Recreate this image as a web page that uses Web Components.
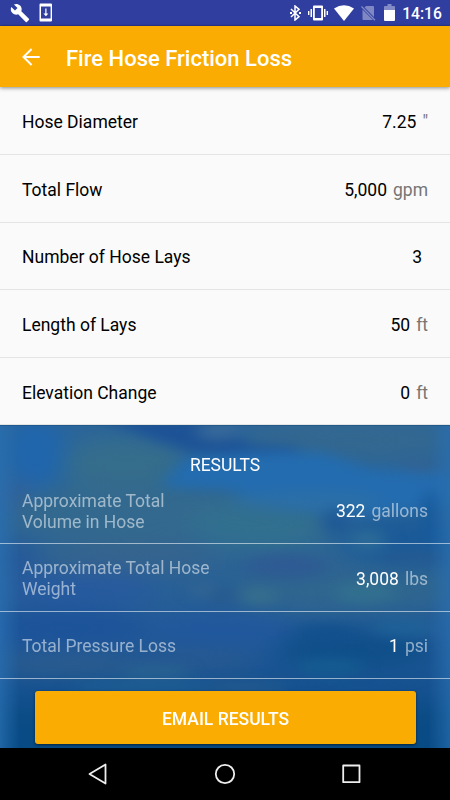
<!DOCTYPE html>
<html lang="en">
<head>
<meta charset="utf-8">
<title>Fire Hose Friction Loss</title>
<style>
  body {
    margin: 0;
    font-family: Roboto, "Liberation Sans", sans-serif;
    font-size: 17.5px;
    color: #000;
    background: #fafafa;
  }
</style>
</head>
<body>
<hose-app></hose-app>

<script>
class StatusBar extends HTMLElement {
  constructor() {
    super();
    this.attachShadow({ mode: "open" }).innerHTML = `
      <style>
        :host {
          display: flex;
          align-items: center;
          box-sizing: border-box;
          height: 26px;
          padding: 0 8px 0 10px;
          background: #303f9f;
          border-bottom: 1px solid #2c3990;
          color: #fff;
          font-size: 15.6px;
          font-weight: 500;
        }
        svg { display: block; fill: #fff; flex: none; }
        .space { flex: 1; }
        .time { line-height: 26px; padding-top: 3px; width: 40px; text-align: center; }
      </style>
      <svg width="20" height="20" viewBox="0 0 24 24"><path d="M22.7 19l-9.1-9.1c.9-2.3.4-5-1.5-6.9-2-2-5-2.4-7.4-1.3L9 6 6 9 1.6 4.700C.4 7.100.9 10.100 2.900 12.100c1.900 1.900 4.600 2.400 6.900 1.500l9.100 9.100c.4.400 1 .400 1.400 0l2.300-2.300c.5-.4.5-1.100.1-1.400z"/></svg>
      <svg width="14" height="19" viewBox="0 0 14 19" style="margin-left:9px"><path fill-rule="evenodd" d="M1.500.500h10.500q1 0 1 1v16q0 1-1 1H1.500q-1 0-1-1v-16q0-1 1-1zM2 3.500v12h9.600v-12z"/><path d="M6.300 5.500h1.200v5h1.900l-2.500 2.700-2.500-2.700h1.900z"/></svg>
      <span class="space"></span>
      <svg width="11" height="16" viewBox="0 0 11 16"><path d="M1 4l8 7.600-4 3.400V1l4 3.400L1 12" fill="none" stroke="#fff" stroke-width="1.500"/><path d="M0 7h2v2H0zM9 7h2v2H9z"/></svg>
      <svg width="20" height="16" viewBox="0 0 20 16" style="margin-left:7px"><path fill-rule="evenodd" d="M6 .5h8q1 0 1 1v13q0 1-1 1H6q-1 0-1-1v-13q0-1 1-1zM6.800 3v10h6.400V3z"/><path d="M2.500 4h1.500v8H2.500zM16 4h1.500v8H16zM0 6h1.400v4H0zM18.600 6H20v4h-1.400z"/></svg>
      <svg width="20" height="16" viewBox="0 0 20 16" style="margin-left:6px"><path d="M0 3.600Q10-3.300 20 3.600L10 16z"/></svg>
      <svg width="15" height="16" viewBox="0 0 15 16" style="margin-left:7px;opacity:.38"><path d="M5 1h7q1 0 1 1v10L3.600 2.400zM1.500 4.400L12 15H2.500q-1 0-1-1z"/><path d="M.500 1.500l13.500 13.700" fill="none" stroke="#fff" stroke-width="1.300"/></svg>
      <svg width="11" height="17" viewBox="0 0 11 17" style="margin-left:8px"><path opacity=".4" d="M3.500 0h4v2H10q1 0 1 1v3H0V3q0-1 1-1h2.500z"/><path d="M0 6h11v10q0 1-1 1H1q-1 0-1-1z"/></svg>
      <span class="time" style="margin-left:7px">14:16</span>
    `;
  }
}

class AppBar extends HTMLElement {
  constructor() {
    super();
    this.attachShadow({ mode: "open" }).innerHTML = `
      <style>
        :host {
          display: flex;
          align-items: center;
          box-sizing: border-box;
          height: 61px;
          padding: 3px 22px 0;
          background: #fbac02;
          box-shadow: 0 1px 4px rgba(0, 0, 0, .45);
          position: relative;
          color: #fff;
          font-size: 22px;
          font-weight: 500;
        }
        svg { margin: -3px 26px 0 0; }
      </style>
      <svg width="18" height="18" viewBox="0 0 18 18" fill="none" stroke="#fff" stroke-width="2"><path d="M17.700 9H1.500M9.600 1L1.500 9l8.100 8"/></svg>
      <slot></slot>
    `;
  }
}

class ValueRow extends HTMLElement {
  constructor() {
    super();
    this.attachShadow({ mode: "open" }).innerHTML = `
      <style>
        :host {
          display: flex;
          align-items: center;
          justify-content: space-between;
          box-sizing: border-box;
          height: 67.6px;
          padding: 4px 22px 0;
          border-bottom: 1px solid var(--line, #e4e4e4);
          line-height: 21px;
        }
        .label { color: var(--label, #000); max-width: 200px; }
        .unit { color: var(--unit, #757575); margin-left: 6px; }
      </style>
      <span class="label"><slot></slot></span>
      <span><span class="value"></span><span class="unit"></span></span>
    `;
  }

  connectedCallback() {
    this.shadowRoot.querySelector(".value").textContent = this.getAttribute("value");
    this.shadowRoot.querySelector(".unit").textContent = this.getAttribute("unit") || "";
  }
}

class ResultsPanel extends HTMLElement {
  constructor() {
    super();
    this.attachShadow({ mode: "open" }).innerHTML = `
      <style>
        :host {
          display: block;
          position: relative;
          box-sizing: border-box;
          height: 323px;
          overflow: hidden;
          color: #fff;
          --line: rgba(255, 255, 255, .55);
          --label: rgba(255, 255, 255, .53);
          --unit: rgba(255, 255, 255, .53);
        }
        .water { position: absolute; inset: 0; }
        .content { position: relative; }
        h2 {
          margin: 0;
          height: 51.4px;
          padding-top: 30px;
          box-sizing: border-box;
          font-size: 17.5px;
          font-weight: 400;
          line-height: 21px;
          text-align: center;
        }
      </style>
      <svg class="water" width="450" height="323" viewBox="0 0 450 323">
        <defs>
          <linearGradient id="sea" x1="0" y1="0" x2="0" y2="1">
            <stop offset="0" stop-color="#2b659b"/>
            <stop offset=".4" stop-color="#2d6595"/>
            <stop offset=".65" stop-color="#225a98"/>
            <stop offset=".82" stop-color="#155190"/>
            <stop offset=".9" stop-color="#0b4c86"/>
            <stop offset="1" stop-color="#074a84"/>
          </linearGradient>
          <linearGradient id="edge">
            <stop offset="0" stop-color="#2a70b2" stop-opacity=".7"/>
            <stop offset=".045" stop-color="#2a70b2" stop-opacity="0"/>
            <stop offset=".95" stop-color="#2a70b2" stop-opacity="0"/>
            <stop offset="1" stop-color="#2a70b2" stop-opacity=".65"/>
          </linearGradient>
          <filter id="soft" x="-20%" y="-20%" width="140%" height="140%" color-interpolation-filters="sRGB"><feGaussianBlur stdDeviation="11"/></filter>
          <filter id="fine" x="-20%" y="-20%" width="140%" height="140%" color-interpolation-filters="sRGB"><feGaussianBlur stdDeviation="8 6"/></filter>
        </defs>
        <rect width="450" height="323" fill="url(#sea)"/>
        <g filter="url(#soft)">
          <ellipse cx="125" cy="38" rx="62" ry="27" fill="#356d8c"/>
          <ellipse cx="35" cy="28" rx="30" ry="36" fill="#2066ac"/>
          <ellipse cx="14" cy="72" rx="20" ry="16" fill="#33609a"/>
          <ellipse cx="140" cy="88" rx="130" ry="30" fill="#33698e"/>
          <ellipse cx="260" cy="100" rx="70" ry="24" fill="#32708f"/>
          <ellipse cx="350" cy="15" rx="110" ry="22" fill="#336890"/>
          <ellipse cx="400" cy="115" rx="60" ry="24" fill="#1b5a98"/>
          <ellipse cx="350" cy="165" rx="120" ry="22" fill="#2f668f"/>
          <ellipse cx="130" cy="132" rx="90" ry="13" fill="#36638e"/>
          <ellipse cx="15" cy="132" rx="28" ry="14" fill="#25589a"/>
          <ellipse cx="75" cy="163" rx="85" ry="14" fill="#2659a0"/>
          <ellipse cx="60" cy="203" rx="90" ry="18" fill="#1c539a"/>
          <ellipse cx="70" cy="239" rx="80" ry="9" fill="#315f8c"/>
          <ellipse cx="190" cy="235" rx="70" ry="9" fill="#2b5b90"/>
          <ellipse cx="220" cy="205" rx="75" ry="12" fill="#20579f"/>
          <ellipse cx="355" cy="225" rx="80" ry="20" fill="#0f4f89"/>
        </g>
        <g filter="url(#fine)">
          <path d="M90-10h80l40 5 40 25 50 2-5 8-100-2-40-13z" fill="#1d5396"/>
          <path d="M160 62l25-28q70-11 140-6l45 16 80 4v34l-100 10-60-8-65-20z" fill="#236caf"/>
          <ellipse cx="305" cy="77" rx="75" ry="10" fill="#2f70a4" opacity=".7"/>
          <ellipse cx="218" cy="6" rx="22" ry="9" fill="#37699a"/>
          <ellipse cx="423" cy="42" rx="24" ry="7" fill="#35629290"/>
          <ellipse cx="432" cy="95" rx="10" ry="30" fill="#175a9c"/>
          <ellipse cx="367" cy="115" rx="19" ry="11" fill="#2b6a97"/>
          <ellipse cx="337" cy="97" rx="14" ry="14" fill="#205a96"/>
          <ellipse cx="285" cy="141" rx="42" ry="12" fill="#2e5b93"/>
          <ellipse cx="420" cy="133" rx="40" ry="7" fill="#245a92"/>
          <ellipse cx="205" cy="165" rx="16" ry="7" fill="#326593"/>
          <ellipse cx="222" cy="171" rx="12" ry="9" fill="#25598d" opacity=".8"/>
          <ellipse cx="259" cy="171" rx="18" ry="8" fill="#366f8d"/>
          <ellipse cx="365" cy="167" rx="32" ry="10" fill="#32708f"/>
          <ellipse cx="325" cy="208" rx="30" ry="8" fill="#0e4f8b" opacity=".7"/>
          <ellipse cx="405" cy="203" rx="35" ry="8" fill="#20659a" opacity=".7"/>
          <ellipse cx="155" cy="246" rx="36" ry="5" fill="#2b6590"/>
          <ellipse cx="330" cy="242" rx="34" ry="8" fill="#155c91"/>
          <ellipse cx="145" cy="262" rx="75" ry="5" fill="#1f6093"/>
          <ellipse cx="245" cy="262" rx="45" ry="5" fill="#255b8c"/>
        </g>
        <rect width="450" height="323" fill="url(#edge)"/>
        <rect width="450" height="1" fill="#1c5686" opacity=".7"/>
      </svg>
      <div class="content">
        <h2><slot name="heading"></slot></h2>
        <slot></slot>
      </div>
    `;
  }
}

class RaisedButton extends HTMLElement {
  constructor() {
    super();
    this.attachShadow({ mode: "open" }).innerHTML = `
      <style>
        :host { display: block; padding: 12px 34px 0 35px; }
        button {
          display: block;
          width: 100%;
          height: 53px;
          padding: 3px 0 0;
          border: 0;
          border-radius: 3px;
          background: #fbac02;
          box-shadow: 0 1px 3px rgba(0, 0, 0, .55);
          color: #fff;
          font: 500 17.5px Roboto, "Liberation Sans", sans-serif;
        }
      </style>
      <button><slot></slot></button>
    `;
  }
}

class NavBar extends HTMLElement {
  constructor() {
    super();
    this.attachShadow({ mode: "open" }).innerHTML = `
      <style>
        :host {
          display: flex;
          align-items: center;
          justify-content: center;
          gap: 105px;
          height: 52px;
          background: #000;
        }
        svg { fill: none; stroke: #eee; stroke-width: 1.8; stroke-linejoin: round; }
      </style>
      <svg width="22" height="22" viewBox="0 0 22 22"><path d="M18.500 1.500v19L2.500 11z"/></svg>
      <svg width="22" height="22" viewBox="0 0 22 22"><circle cx="11" cy="11" r="9.200"/></svg>
      <svg width="22" height="22" viewBox="0 0 22 22"><path d="M2.200 2.500h16.300v16.700H2.200z"/></svg>
    `;
  }
}

class HoseApp extends HTMLElement {
  constructor() {
    super();
    this.attachShadow({ mode: "open" }).innerHTML = `
      <style>
        :host { display: flex; flex-direction: column; width: 450px; height: 800px; overflow: hidden; }
        .inputs { box-sizing: border-box; height: 338px; padding-top: .4px; overflow: hidden; }
      </style>
      <status-bar></status-bar>
      <app-bar>Fire Hose Friction Loss</app-bar>
      <div class="inputs">
        <value-row value="7.25" unit='"'>Hose Diameter</value-row>
        <value-row value="5,000" unit="gpm">Total Flow</value-row>
        <value-row value="3">Number of Hose Lays</value-row>
        <value-row value="50" unit="ft">Length of Lays</value-row>
        <value-row value="0" unit="ft">Elevation Change</value-row>
      </div>
      <results-panel>
        <span slot="heading">RESULTS</span>
        <value-row value="322" unit="gallons">Approximate Total Volume in Hose</value-row>
        <value-row value="3,008" unit="lbs">Approximate Total Hose Weight</value-row>
        <value-row value="1" unit="psi">Total Pressure Loss</value-row>
        <raised-button>EMAIL RESULTS</raised-button>
      </results-panel>
      <nav-bar></nav-bar>
    `;
  }
}

customElements.define("status-bar", StatusBar);
customElements.define("app-bar", AppBar);
customElements.define("value-row", ValueRow);
customElements.define("results-panel", ResultsPanel);
customElements.define("raised-button", RaisedButton);
customElements.define("nav-bar", NavBar);
customElements.define("hose-app", HoseApp);
</script>
</body>
</html>
